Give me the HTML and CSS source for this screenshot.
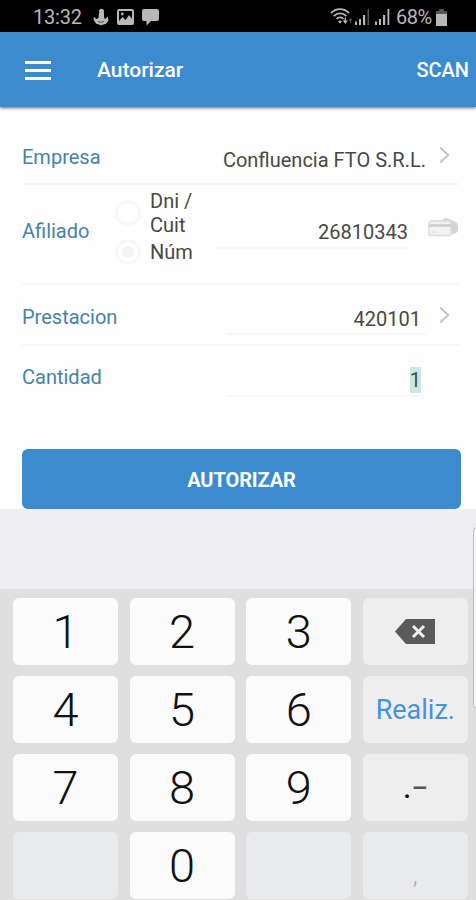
FILE: index.html
```
<!DOCTYPE html>
<html lang="es">
<head>
  <meta charset="UTF-8">
  <title>Autorizar</title>
  <link rel="stylesheet" href="styles.css">
</head>
<body>
  <!-- Status bar -->
  <div class="status-bar">
    <span class="clock">13:32</span>
    <svg class="icon-notice" width="16" height="18" viewBox="0 0 16 18">
      <circle cx="8.5" cy="3.3" r="2.5"/>
      <path d="M6 5h5v5l1.500 1 2.200-2.500.8 4-2.500 3.200-4.800 1.500-5-1.500L.6 12l.2-3.200L3.500 11l2-1z"/>
      <path class="cut" d="M5 13.500l3 .8 3-.8"/>
    </svg>
    <svg class="icon-image" width="17" height="16" viewBox="0 0 17 16">
      <path fill-rule="evenodd" d="M2 0h13a2 2 0 0 1 2 2v12a2 2 0 0 1-2 2H2a2 2 0 0 1-2-2V2a2 2 0 0 1 2-2zm0 2v12h13V2z"/>
      <path d="M2 12l3.500-4 3 3L12 6l3 4v4H2z"/>
      <circle cx="5.3" cy="5" r="1.4"/>
    </svg>
    <svg class="icon-chat" width="17" height="17" viewBox="0 0 17 17">
      <path d="M2 0h13a2 2 0 0 1 2 2v8a2 2 0 0 1-2 2H9l-4.500 4.600V12H2a2 2 0 0 1-2-2V2a2 2 0 0 1 2-2z"/>
    </svg>
    <div class="status-right">
      <svg class="icon-wifi" width="23" height="18" viewBox="0 0 23 18">
        <path class="arc" d="M1 5.200C6-.2 14-.2 19 5.200M3.800 8.200c3.500-3.700 9-3.700 12.500 0M6.600 11c2-2.100 4.900-2.100 6.900 0"/>
        <path d="M10 15.800l-2-2.600q2-1.400 4 0z"/>
        <path d="M12.800 12.500h1.800V9.600h1.400v2.900h1.800l-2.500 3.600z"/>
        <path class="dim" d="M18.500 12.500l2-2.800 2 2.800h-1.400V15h-1.200v-2.500z"/>
      </svg>
      <svg class="icon-signal" width="15" height="17" viewBox="0 0 15 17">
        <path d="M0 12.500h2V16H0zM4 10h2v6H4zM8 6h2.200v10H8z"/>
        <path class="dim" d="M12.500 0h1.600v16h-1.600z"/>
      </svg>
      <svg class="icon-signal second" width="15" height="17" viewBox="0 0 15 17">
        <path d="M0 12.500h2V16H0zM4 10h2v6H4zM8 6h2.200v10H8zM12.500 0h1.800v16h-1.800z"/>
      </svg>
      <span class="percent">68%</span>
      <svg class="icon-battery" width="11" height="17" viewBox="0 0 11 17">
        <path class="dim" d="M3 0h5v2h3v4H0V2h3z"/>
        <path d="M0 5h11v12H0z"/>
      </svg>
    </div>
  </div>

  <!-- Toolbar -->
  <header class="toolbar">
    <button class="menu-button" aria-label="Menu"><i></i><i></i><i></i></button>
    <h1>Autorizar</h1>
    <button class="scan-button">SCAN</button>
  </header>

  <main class="form">
    <div class="row row-empresa">
      <label>Empresa</label>
      <span class="value">Confluencia FTO S.R.L.</span>
      <svg class="chevron" width="11" height="18" viewBox="0 0 11 18"><path d="M1.200 1.500l8 7.500-8 7.500"/></svg>
    </div>
    <div class="row row-afiliado">
      <label>Afiliado</label>
      <div class="radios">
        <div class="radio"><span class="dot"></span><span>Dni /<br>Cuit</span></div>
        <div class="radio"><span class="dot checked"></span><span>Núm</span></div>
      </div>
      <span class="value underlined">26810343</span>
      <svg class="card" width="31" height="21" viewBox="0 0 31 21">
        <path class="back" d="M14 3l4-2.500L28 5q2 1 2 4v4q0 2-2 3l-6 2V5z"/>
        <rect class="front" x="1" y="4" width="22" height="14.500" rx="2"/>
        <path class="stripe" d="M1 8.500h22"/>
        <path class="mark" d="M3.500 15h5"/>
      </svg>
    </div>
    <div class="row row-prestacion">
      <label>Prestacion</label>
      <span class="value underlined">420101</span>
      <svg class="chevron" width="11" height="18" viewBox="0 0 11 18"><path d="M1.200 1.500l8 7.500-8 7.500"/></svg>
    </div>
    <div class="row row-cantidad">
      <label>Cantidad</label>
      <span class="value underlined"><mark>1</mark></span>
    </div>
    <button class="submit">AUTORIZAR</button>
  </main>

  <div class="spacer"></div>

  <!-- Numeric keyboard -->
  <div class="keyboard">
    <div class="key">1</div>
    <div class="key">2</div>
    <div class="key">3</div>
    <div class="key side">
      <svg class="backspace" width="40" height="25" viewBox="0 0 40 25">
        <path d="M11 0h29v25H11L0 12.500z"/>
        <path class="cross" d="M18 7l11 11M29 7L18 18"/>
      </svg>
    </div>
    <div class="key">4</div>
    <div class="key">5</div>
    <div class="key">6</div>
    <div class="key side done">Realiz.</div>
    <div class="key">7</div>
    <div class="key">8</div>
    <div class="key">9</div>
    <div class="key side symbols"><span class="point">.</span><span class="dash">–</span></div>
    <div class="key empty"></div>
    <div class="key">0</div>
    <div class="key empty"></div>
    <div class="key empty comma">,</div>
  </div>

  <div class="edge-handle"></div>
</body>
</html>
```
FILE: styles.css
```
* {
  box-sizing: border-box;
}

body {
  margin: 0;
  width: 476px;
  height: 900px;
  overflow: hidden;
  position: relative;
  display: flex;
  flex-direction: column;
  font-family: Roboto, sans-serif;
  background: #fefefe;
  color: #484848;
}

button {
  border: none;
  padding: 0;
  font-family: inherit;
  color: #fff;
  background: none;
}

/* Status bar */
.status-bar {
  height: 32px;
  flex: none;
  display: flex;
  align-items: center;
  padding: 2px 29px 0 33px;
  background: #000;
  color: #b8b8b8;
  font-size: 20px;
}

.status-bar svg {
  fill: #b8b8b8;
}

.status-bar .dim {
  fill: #555;
}

.clock {
  width: 60px;
  letter-spacing: -0.2px;
}

.status-bar .cut {
  stroke: #555;
  fill: none;
}

.icon-image {
  margin-left: 8px;
}

.icon-chat {
  margin-left: 8px;
}

.status-right {
  margin-left: auto;
  display: flex;
  align-items: center;
}

.status-bar .arc {
  fill: none;
  stroke: #b8b8b8;
  stroke-width: 1.8;
}

.icon-signal {
  margin-left: 2px;
}

.icon-signal.second {
  margin-left: 5px;
}

.percent {
  margin-left: 6px;
  width: 40px;
  letter-spacing: -0.5px;
}

/* Toolbar */
.toolbar {
  height: 75px;
  flex: none;
  display: flex;
  align-items: center;
  padding: 1px 7px 0 25px;
  background: #3c8bce;
  box-shadow: 0 1px 3px rgba(0, 0, 0, 0.6);
  color: #fff;
}

.menu-button {
  width: 26px;
  display: flex;
  flex-direction: column;
  gap: 5px;
}

.menu-button i {
  height: 3px;
  background: #f2fbff;
}

.toolbar h1 {
  margin: 0 0 0 46px;
  font-size: 21px;
  font-weight: 500;
}

.scan-button {
  margin-left: auto;
  font-size: 20px;
  font-weight: 500;
}

/* Form */
.form {
  height: 402px;
  flex: none;
  padding: 23px 15px 0 22px;
  font-size: 20px;
}

.row {
  display: flex;
  align-items: center;
  margin-right: 2px;
  border-bottom: 2px solid #f6f6f6;
}

.row label {
  color: #4583a9;
}

.value {
  margin-left: auto;
  text-align: right;
}

.value.underlined {
  border-bottom: 2px solid #f8f8f8;
}

.chevron {
  fill: none;
  stroke: #c4c4c4;
  stroke-width: 2;
}

.row-empresa {
  height: 55px;
}

.row-empresa .value {
  padding-top: 7px;
  margin-right: 13px;
}

.row-empresa .chevron,
.row-prestacion .chevron {
  margin: 0 9px 4px 0;
}

.row-afiliado {
  height: 100px;
}

.row-afiliado label {
  width: 93px;
  padding-bottom: 6px;
}

.radios {
  width: 97px;
  padding-bottom: 14px;
  line-height: 24px;
}

.radio {
  display: flex;
  align-items: center;
  gap: 9px;
}

.radio + .radio {
  margin-top: 2px;
}

.dot {
  width: 26px;
  height: 26px;
  border: 3px solid #f8f8f8;
  border-radius: 50%;
  padding: 4px;
}

.dot.checked::before {
  content: "";
  display: block;
  width: 12px;
  height: 12px;
  border-radius: 50%;
  background: #f4f4f4;
}

.row-afiliado .value {
  width: 199px;
  height: 30px;
  padding: 1px 3px 0 0;
  margin-right: 17px;
}

.card {
  margin-bottom: 14px;
}

.card .back {
  fill: #d3d5d7;
}

.card .front {
  fill: #f2f2f2;
  stroke: #dcdcdc;
  stroke-width: 1.5;
}

.card .stripe {
  stroke: #ccc;
  stroke-width: 2.5;
}

.card .mark {
  stroke: #ddd;
}

.row-prestacion {
  height: 61px;
  padding-top: 4px;
}

.row-prestacion .value {
  width: 200px;
  height: 30px;
  padding: 2px 6px 0 0;
  margin: 7px 12px 0 auto;
}

.row-cantidad {
  height: 62px;
  border-bottom: none;
}

.row-cantidad .value {
  width: 198px;
  height: 30px;
  margin: 10px 35px 0 auto;
  padding-right: 3px;
}

mark {
  display: inline-block;
  height: 26px;
  line-height: 26px;
  background: #c9e8e1;
  color: #484848;
}

.submit {
  display: block;
  width: 439px;
  height: 60px;
  padding-top: 2px;
  margin-top: 41px;
  border-radius: 6px;
  background: #3c8bce;
  font-size: 20px;
  font-weight: 700;
  letter-spacing: -0.1px;
}

.spacer {
  height: 80px;
  flex: none;
  background: #eeedf2;
}

/* Numeric keyboard */
.keyboard {
  height: 311px;
  flex: none;
  display: grid;
  grid-template-columns: repeat(4, 105px);
  grid-auto-rows: 67px;
  column-gap: 11.6px;
  row-gap: 11px;
  padding: 9px 0 0 13px;
  background: #dfdfdf;
}

.key {
  display: flex;
  align-items: center;
  justify-content: center;
  border-radius: 6px;
  background: #fbfbfb;
  color: #111;
  font-size: 47px;
  font-weight: 300;
}

.key.side {
  background: #eee;
}

.key.empty {
  background: #e8eaed;
}

.backspace {
  fill: #5a5a5a;
}

.cross {
  fill: none;
  stroke: #eee;
  stroke-width: 3;
}

.key.done {
  color: #4593df;
  font-size: 27px;
  font-weight: 400;
}

.key.symbols {
  font-size: 34px;
  font-weight: 400;
}

.point {
  padding-bottom: 3px;
}

.dash {
  padding-top: 2px;
  font-size: 25px;
  font-weight: 500;
  color: #555;
}

.key.comma {
  padding-top: 16px;
  color: #aaa;
  font-size: 26px;
}

/* Panel handle peeking in over the right edge */
.edge-handle {
  position: absolute;
  top: 527px;
  right: -6px;
  width: 9px;
  height: 182px;
  border: 1px solid #bbb;
  border-radius: 6px;
  background: #f7f7f7;
}
```
